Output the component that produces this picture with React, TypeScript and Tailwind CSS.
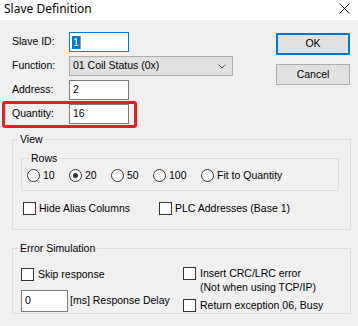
import React from "react";

const font = { fontFamily: '"Liberation Sans", Arial, sans-serif' };

function Radio({ label, checked, w }: { label: string; checked?: boolean; w: string }) {
  return (
    <div className={`flex items-center h-[13px] ${w}`}>
      <span className="w-[13px] h-[13px] rounded-full border border-[#333333] bg-white flex items-center justify-center shrink-0">
        {checked && <span className="w-[5px] h-[5px] rounded-full bg-[#333333]" />}
      </span>
      <span className="ml-[3px] leading-[13px]">{label}</span>
    </div>
  );
}

function Check() {
  return <span className="w-[13px] h-[13px] border border-[#333333] bg-white shrink-0 block" />;
}

export default function App() {
  return (
    <div
      className="w-[358px] h-[326px] bg-[#f0f0f0] text-black text-[10.5px] overflow-hidden relative"
      style={font}
    >
      {/* Title bar */}
      <div className="h-[20px] bg-white flex items-start justify-between pl-[4px] pr-[8px]">
        <span className="text-[12px] leading-[17px] pt-[0px]" style={{ fontFamily: '"Noto Sans", sans-serif' }}>
          Slave Definition
        </span>
        <svg width="11" height="11" viewBox="0 0 11 11" className="mt-[3px]">
          <path d="M0.5 0.5 L10.5 10.5 M10.5 0.5 L0.5 10.5" stroke="#111" strokeWidth="1" fill="none" />
        </svg>
      </div>

      {/* Top section */}
      <div className="flex pt-[12px] pr-[8px]">
        <div className="grid grid-cols-[57px_auto] gap-y-[4px] items-center pl-[12px]">
          <span>Slave ID:</span>
          <div className="w-[60px] h-[20px] border border-[#0078d7] bg-white flex items-center pl-[2px]">
            <span className="bg-[#0078d7] text-white leading-[13px] px-[1px]">1</span>
            <span className="w-[1px] h-[13px] bg-[#f08a24]" />
          </div>
          <span>Function:</span>
          <div className="w-[164px] h-[20px] border border-[#adadad] bg-[#e1e1e1] flex items-center justify-between pl-[3px] pr-[6px]">
            <span>01 Coil Status (0x)</span>
            <svg width="8" height="5" viewBox="0 0 8 5">
              <path d="M0.5 0.5 L4 4 L7.5 0.5" stroke="#555" strokeWidth="1" fill="none" />
            </svg>
          </div>
          <span>Address:</span>
          <div className="w-[60px] h-[20px] border border-[#7a7a7a] bg-white flex items-center pl-[3px]">2</div>
          <span>Quantity:</span>
          <div className="w-[60px] h-[20px] border border-[#7a7a7a] bg-white flex items-center pl-[3px]">16</div>
        </div>
        <div className="ml-auto flex flex-col">
          <div className="mt-[1px] w-[74px] h-[22px] border-2 border-[#0078d7] bg-[#e1e1e1] flex items-center justify-center">
            OK
          </div>
          <div className="mt-[9px] w-[74px] h-[21px] border border-[#adadad] bg-[#e1e1e1] flex items-center justify-center">
            Cancel
          </div>
        </div>
      </div>

      {/* Red highlight */}
      <div className="absolute left-[2px] top-[101px] w-[135px] h-[27px] border-[3px] border-[#ee1c1c] rounded-[3px] pointer-events-none" />

      {/* View group */}
      <fieldset className="mt-[9px] ml-[12px] mr-[7px] border border-[#dcdcdc]">
        <legend className="ml-[5px] px-[2px] leading-[13px]">View</legend>
        <div className="pl-[8px] pr-[11px]">
          <fieldset className="mt-[6px] border border-[#dcdcdc]">
            <legend className="ml-[7px] px-[2px] leading-[13px]">Rows</legend>
            <div className="flex pl-[5px] mt-[4px] mb-[8px]">
              <Radio label="10" w="w-[42px]" />
              <Radio label="20" checked w="w-[42px]" />
              <Radio label="50" w="w-[42px]" />
              <Radio label="100" w="w-[48px]" />
              <Radio label="Fit to Quantity" w="w-auto" />
            </div>
          </fieldset>
        </div>
        <div className="flex pl-[10px] mt-[11px] mb-[14px]">
          <div className="flex items-center w-[136px]">
            <Check />
            <span className="ml-[3px] leading-[13px]">Hide Alias Columns</span>
          </div>
          <div className="flex items-center">
            <Check />
            <span className="ml-[3px] leading-[13px]">PLC Addresses (Base 1)</span>
          </div>
        </div>
      </fieldset>

      {/* Error Simulation */}
      <fieldset className="mt-[12px] ml-[12px] mr-[7px] border border-[#dcdcdc]">
        <legend className="ml-[5px] px-[2px] leading-[13px]">Error Simulation</legend>
        <div className="flex pl-[8px] pb-[1px]">
          <div className="w-[162px] flex flex-col">
            <div className="flex items-center mt-[13px]">
              <Check />
              <span className="ml-[4px] leading-[13px]">Skip response</span>
            </div>
            <div className="flex items-center mt-[9px]">
              <div className="w-[47px] h-[22px] border border-[#7a7a7a] bg-white flex items-center pl-[3px]">0</div>
              <span className="ml-[2px]">[ms] Response Delay</span>
            </div>
          </div>
          <div className="flex flex-col">
            <div className="flex items-start mt-[12px]">
              <Check />
              <span className="ml-[4px] leading-[13.5px] -mt-[0px]">
                Insert CRC/LRC error
                <br />
                (Not when using TCP/IP)
              </span>
            </div>
            <div className="flex items-center mt-[5px]">
              <Check />
              <span className="ml-[4px] leading-[13px]">Return exception 06, Busy</span>
            </div>
          </div>
        </div>
      </fieldset>
    </div>
  );
}
